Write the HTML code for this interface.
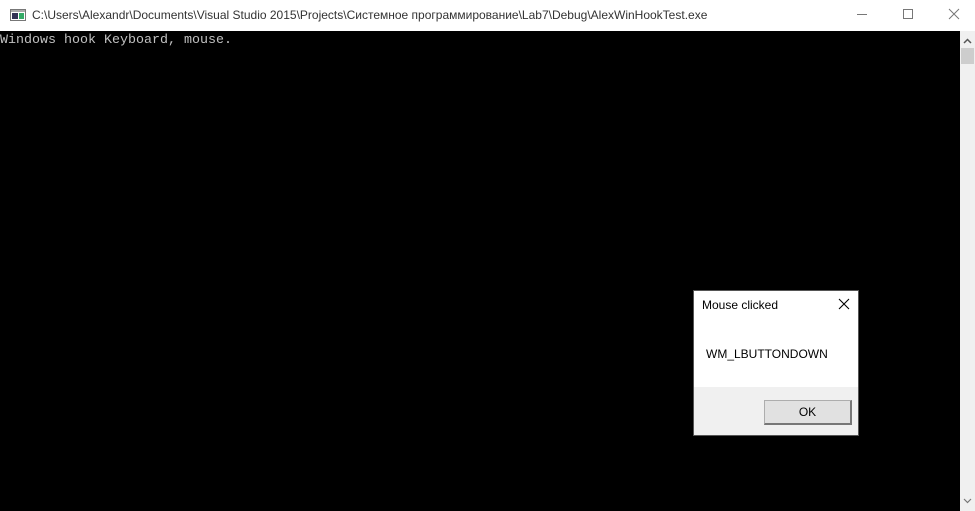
<!DOCTYPE html>
<html><head><meta charset="utf-8"><style>
*{margin:0;padding:0;box-sizing:border-box}
body{width:975px;height:511px;overflow:hidden;background:#fff;position:relative;font-family:"Liberation Sans","DejaVu Sans",sans-serif}
.title{position:absolute;left:0;top:0;width:975px;height:31px;background:#fff}
.title .t{position:absolute;left:32px;top:8px;font-size:12px;color:#333;white-space:nowrap}
.console{position:absolute;left:0;top:31px;width:960px;height:480px;background:#000}
.console pre{font-family:"Liberation Mono",monospace;font-size:13.33px;color:#c0c0c0;position:absolute;left:0;top:2px;line-height:16px}
.sb{position:absolute;left:960px;top:31px;width:15px;height:480px;background:#f0f0f0}
.dlg{position:absolute;left:693px;top:290px;width:166px;height:146px;background:#f0f0f0;border:1px solid #555}
.dlg .w{position:absolute;left:0;top:0;width:164px;height:96px;background:#fff}
.btn{position:absolute;left:70px;top:109px;width:88px;height:25px;background:#e1e1e1;border:1px solid #adadad;border-right:2px solid #777;border-bottom:2px solid #777;font-size:12px;text-align:center;line-height:22px;color:#000}
</style></head><body>
<div class="title">
<svg style="position:absolute;left:10px;top:9px" width="16" height="12"><rect x="0.5" y="0.5" width="15" height="11" fill="#fff" stroke="#777"/><rect x="1" y="1" width="14" height="2" fill="#aaa"/><rect x="2" y="4" width="6" height="6" fill="#335"/><rect x="9" y="4" width="5" height="6" fill="#3a6"/></svg>
<div class="t">C:\Users\Alexandr\Documents\Visual Studio 2015\Projects\Системное программирование\Lab7\Debug\AlexWinHookTest.exe</div>
<svg style="position:absolute;left:855px;top:8px" width="120" height="14"><line x1="2" y1="6.5" x2="12" y2="6.5" stroke="#777"/><rect x="48.5" y="1.5" width="9" height="9" fill="none" stroke="#777"/><path d="M94 1 L104 11 M104 1 L94 11" stroke="#777"/></svg>
</div>
<div class="console"><pre>Windows hook Keyboard, mouse.</pre></div>
<div class="sb">
<svg style="position:absolute;left:3px;top:7px" width="9" height="6"><path d="M1 5 L4.5 1.5 L8 5" stroke="#555" stroke-width="1.5" fill="none"/></svg>
<div style="position:absolute;left:1px;top:17px;width:13px;height:16px;background:#cdcdcd"></div>
<svg style="position:absolute;left:3px;top:467px" width="9" height="6"><path d="M1 1 L4.5 4.5 L8 1" stroke="#777" stroke-width="1.2" fill="none"/></svg>
</div>
<div class="dlg">
<div class="w">
<div style="position:absolute;left:8px;top:7px;font-size:12px;color:#000">Mouse clicked</div>
<svg style="position:absolute;left:144px;top:7px" width="12" height="12"><path d="M1 1 L11 11 M11 1 L1 11" stroke="#000" stroke-width="1.1"/></svg>
<div style="position:absolute;left:12px;top:56px;font-size:12px;color:#000">WM_LBUTTONDOWN</div>
</div>
<div class="btn">OK</div>
</div>
</body></html>
